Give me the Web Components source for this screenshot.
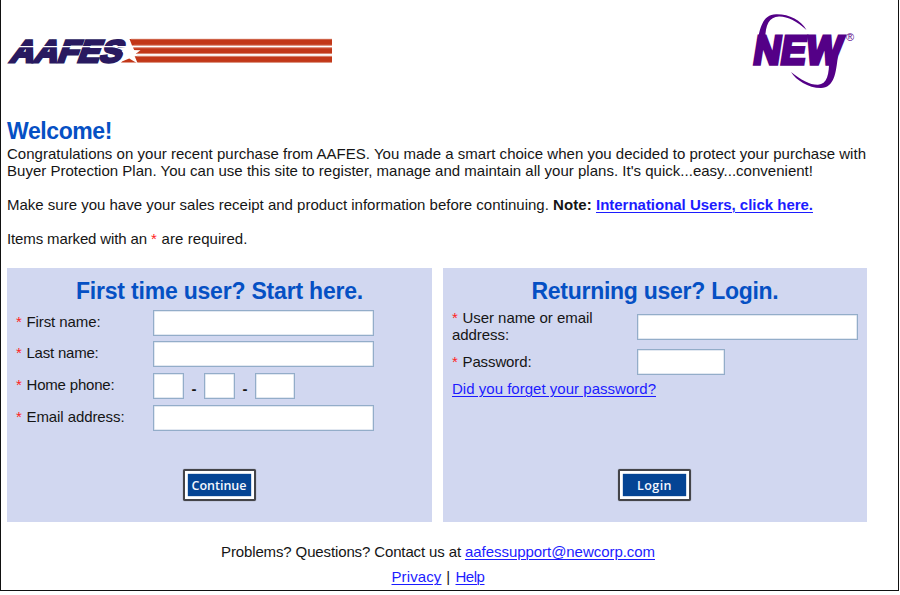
<!DOCTYPE html>
<html lang="en"><head><meta charset="utf-8"><title>Buyer Protection Plan</title>
<style>html,body{margin:0;background:#fff}body{width:900px;height:595px;overflow:hidden;font:15px/17px "Liberation Sans",Arial,sans-serif;color:#151515}</style></head><body>
<plan-page></plan-page>
<script>
const define=(name,html,setup)=>customElements.define(name,class extends HTMLElement{
 connectedCallback(){if(this.shadowRoot)return;this.attachShadow({mode:'open'}).innerHTML=html;if(setup)setup(this,this.shadowRoot)}
});
// Inline text run spaced to a set width.
define('text-run',`<style>:host{display:inline-block;white-space:pre}:host([link]){color:#1c1cff;text-decoration:underline;text-underline-offset:2px;text-decoration-thickness:1px}</style><slot></slot>`,(h)=>{
 const w=+h.getAttribute('w');h.style.letterSpacing='0';
 const n=h.textContent.length,c=h.getBoundingClientRect().width;
 h.style.letterSpacing=((w-c)/n)+'px';
});
define('req-mark',`<style>:host{color:#f22;display:inline-block;width:10.5px}</style>*`);
define('text-field',`<style>:host{display:block;box-sizing:border-box;height:26px;background:#fff;border:1px solid #93adc9;box-shadow:inset 0 0 0 .5px #c5d2e3}</style>`,h=>{h.style.width=h.getAttribute('w')+'px'});
define('image-button',`<style>:host{display:block;box-sizing:border-box;width:73px;height:32px;border:2px solid #444449;border-radius:2px;background:#fff;padding:3px;box-shadow:0 0 1px #555;margin-left:-1px}
div{height:22px;background:#044494;color:#f4f7ff;font:600 12.5px/23px "Open Sans","Noto Sans",sans-serif;text-align:center;box-shadow:0 0 1px #044494}</style><div><slot></slot></div>`);
define('aafes-logo',`<style>:host{display:block;width:326px;height:26px}svg{display:block;overflow:visible}</style>
<svg width="326" height="26" viewBox="7 38 326 26"><g fill="#c23718"><path d="M129.5 39H332V45.4H132zM133 47.6H332V53.8H136zM121 62.6L126 56.2H332V62.6z"/></g>
<g fill="none" stroke="#dc927e" stroke-width=".7"><path d="M131 39.2H332M134 45.2H332M134 47.8H332M137 53.6H332M137 56.2H332M138 62.4H332"/></g>
<text transform="translate(9 61.5) skewX(-20)" font-family="Liberation Sans" font-weight="bold" font-size="31" textLength="111" lengthAdjust="spacingAndGlyphs" fill="#291a60" stroke="#291a60" stroke-width="2.8">AAFES</text>
<path d="M12 46.6H130" stroke="#fff" stroke-width="1.4"/>
<path d="M127.5 42.5L131.4 50L140.5 50.3L134.2 55L137.7 63.6L129.2 58.5L119.5 62.6L125 55.3L121.5 50.8L126 50.5z" fill="#fff"/></svg>`);
define('new-logo',`<style>:host{display:block;width:106px;height:76px}svg{display:block;overflow:visible}</style>
<svg width="106" height="76" viewBox="750 13 106 76" fill="#540087">
<path d="M757 44C760 25 764 14.5 776 14.3C789 14 801 20 806.5 30C797 21 787 16.2 779 16.5C768 17 764.5 27 765.5 44z"/>
<path d="M838 55C836 74 834 87.5 821 88C808 88 796 80 791 72C801 80 810 85 818 84.8C827 84 829.5 75 829 58z"/>
<text transform="translate(752 64) skewX(-9)" font-family="Liberation Sans" font-weight="bold" font-size="40.5" textLength="88" lengthAdjust="spacingAndGlyphs" stroke="#540087" stroke-width="3.4">NEW</text>
<text x="846" y="41" font-family="Liberation Sans" font-size="11">®</text></svg>`);
define('form-row',`<style>:host{display:grid;grid-template-columns:137px 1fr;height:31.7px;align-items:start}.l{padding-top:3px}.f{display:flex}</style><div class="l"><slot name="label"></slot></div><div class="f"><slot></slot></div>`);
define('form-panel',`<style>:host{display:flex;flex-direction:column;box-sizing:border-box;height:254px;background:#d1d7f0;padding:9px 9px 0}
h2{margin:0;font-size:23px;line-height:28px;color:#0550c4;text-align:center;height:32.8px}.b{height:159.2px}.a{display:flex;justify-content:center}</style><h2><slot name="title"></slot></h2><div class="b"><slot></slot></div><div class="a"><slot name="action"></slot></div>`);
define('plan-page',`<style>
:host{display:block;box-sizing:border-box;width:899px;height:591px;border:solid #111;border-width:0 1px 1px 1px;padding:1px 6px 0}
header{display:flex;justify-content:space-between;height:117px;width:849px}aafes-logo{margin-top:37px}new-logo{margin-top:12px}
h1{font-size:23px;line-height:27px;height:26.6px;margin:0;color:#0550c4}.intro{height:123.4px}p{margin:0 0 17px;white-space:nowrap}
.panels{display:grid;grid-template-columns:425px 424px;gap:11px}
.dash{width:20px;text-align:center;font-weight:bold;padding-top:7px;height:17px}
.user{display:grid;grid-template-columns:185px 1fr;height:43.8px;align-items:start}
.user p{margin:-.6px 0 0}.user text-field{margin-top:4px}.second{height:26.6px}.second text-field{margin-top:-5px}
footer{width:862px;text-align:center;padding-top:21px}footer div{height:25.5px;white-space:nowrap}b{font-weight:bold}
</style>
<header><aafes-logo></aafes-logo><new-logo></new-logo></header>
<h1><text-run w="105">Welcome!</text-run></h1>
<div class="intro"><p><text-run w="859">Congratulations on your recent purchase from AAFES. You made a smart choice when you decided to protect your purchase with</text-run><br><text-run w="806">Buyer Protection Plan. You can use this site to register, manage and maintain all your plans. It's quick...easy...convenient!</text-run></p>
<p><text-run w="546">Make sure you have your sales receipt and product information before continuing. </text-run><b><text-run w="43">Note: </text-run><text-run link w="217">International Users, click here.</text-run></b></p>
<p><text-run w="144">Items marked with an </text-run><req-mark></req-mark><text-run w="86">are required.</text-run></p></div>
<div class="panels"><form-panel><text-run slot="title" w="287">First time user? Start here.</text-run>
<form-row><span slot="label"><req-mark></req-mark><text-run w="74">First name:</text-run></span><text-field w="221"></text-field></form-row>
<form-row><span slot="label"><req-mark></req-mark><text-run w="72">Last name:</text-run></span><text-field w="221"></text-field></form-row>
<form-row><span slot="label"><req-mark></req-mark><text-run w="88">Home phone:</text-run></span><text-field w="31"></text-field><span class="dash">-</span><text-field w="31"></text-field><span class="dash">-</span><text-field w="40"></text-field></form-row>
<form-row><span slot="label"><req-mark></req-mark><text-run w="98">Email address:</text-run></span><text-field w="221"></text-field></form-row>
<image-button slot="action"><text-run w="55">Continue</text-run></image-button></form-panel>
<form-panel><text-run slot="title" w="247">Returning user? Login.</text-run>
<div class="user"><p><req-mark></req-mark><text-run w="130">User name or email</text-run><br><text-run w="57">address:</text-run></p><text-field w="221"></text-field></div>
<div class="user second"><p><req-mark></req-mark><text-run w="69">Password:</text-run></p><text-field w="88"></text-field></div>
<text-run link w="204">Did you forget your password?</text-run>
<image-button slot="action"><text-run w="35">Login</text-run></image-button></form-panel></div>
<footer><div><text-run w="244">Problems? Questions? Contact us at </text-run><text-run link w="190">aafessupport@newcorp.com</text-run></div><div><text-run link w="50">Privacy</text-run><text-run w="14"> | </text-run><text-run link w="29">Help</text-run></div></footer>`);
</script></body></html>
